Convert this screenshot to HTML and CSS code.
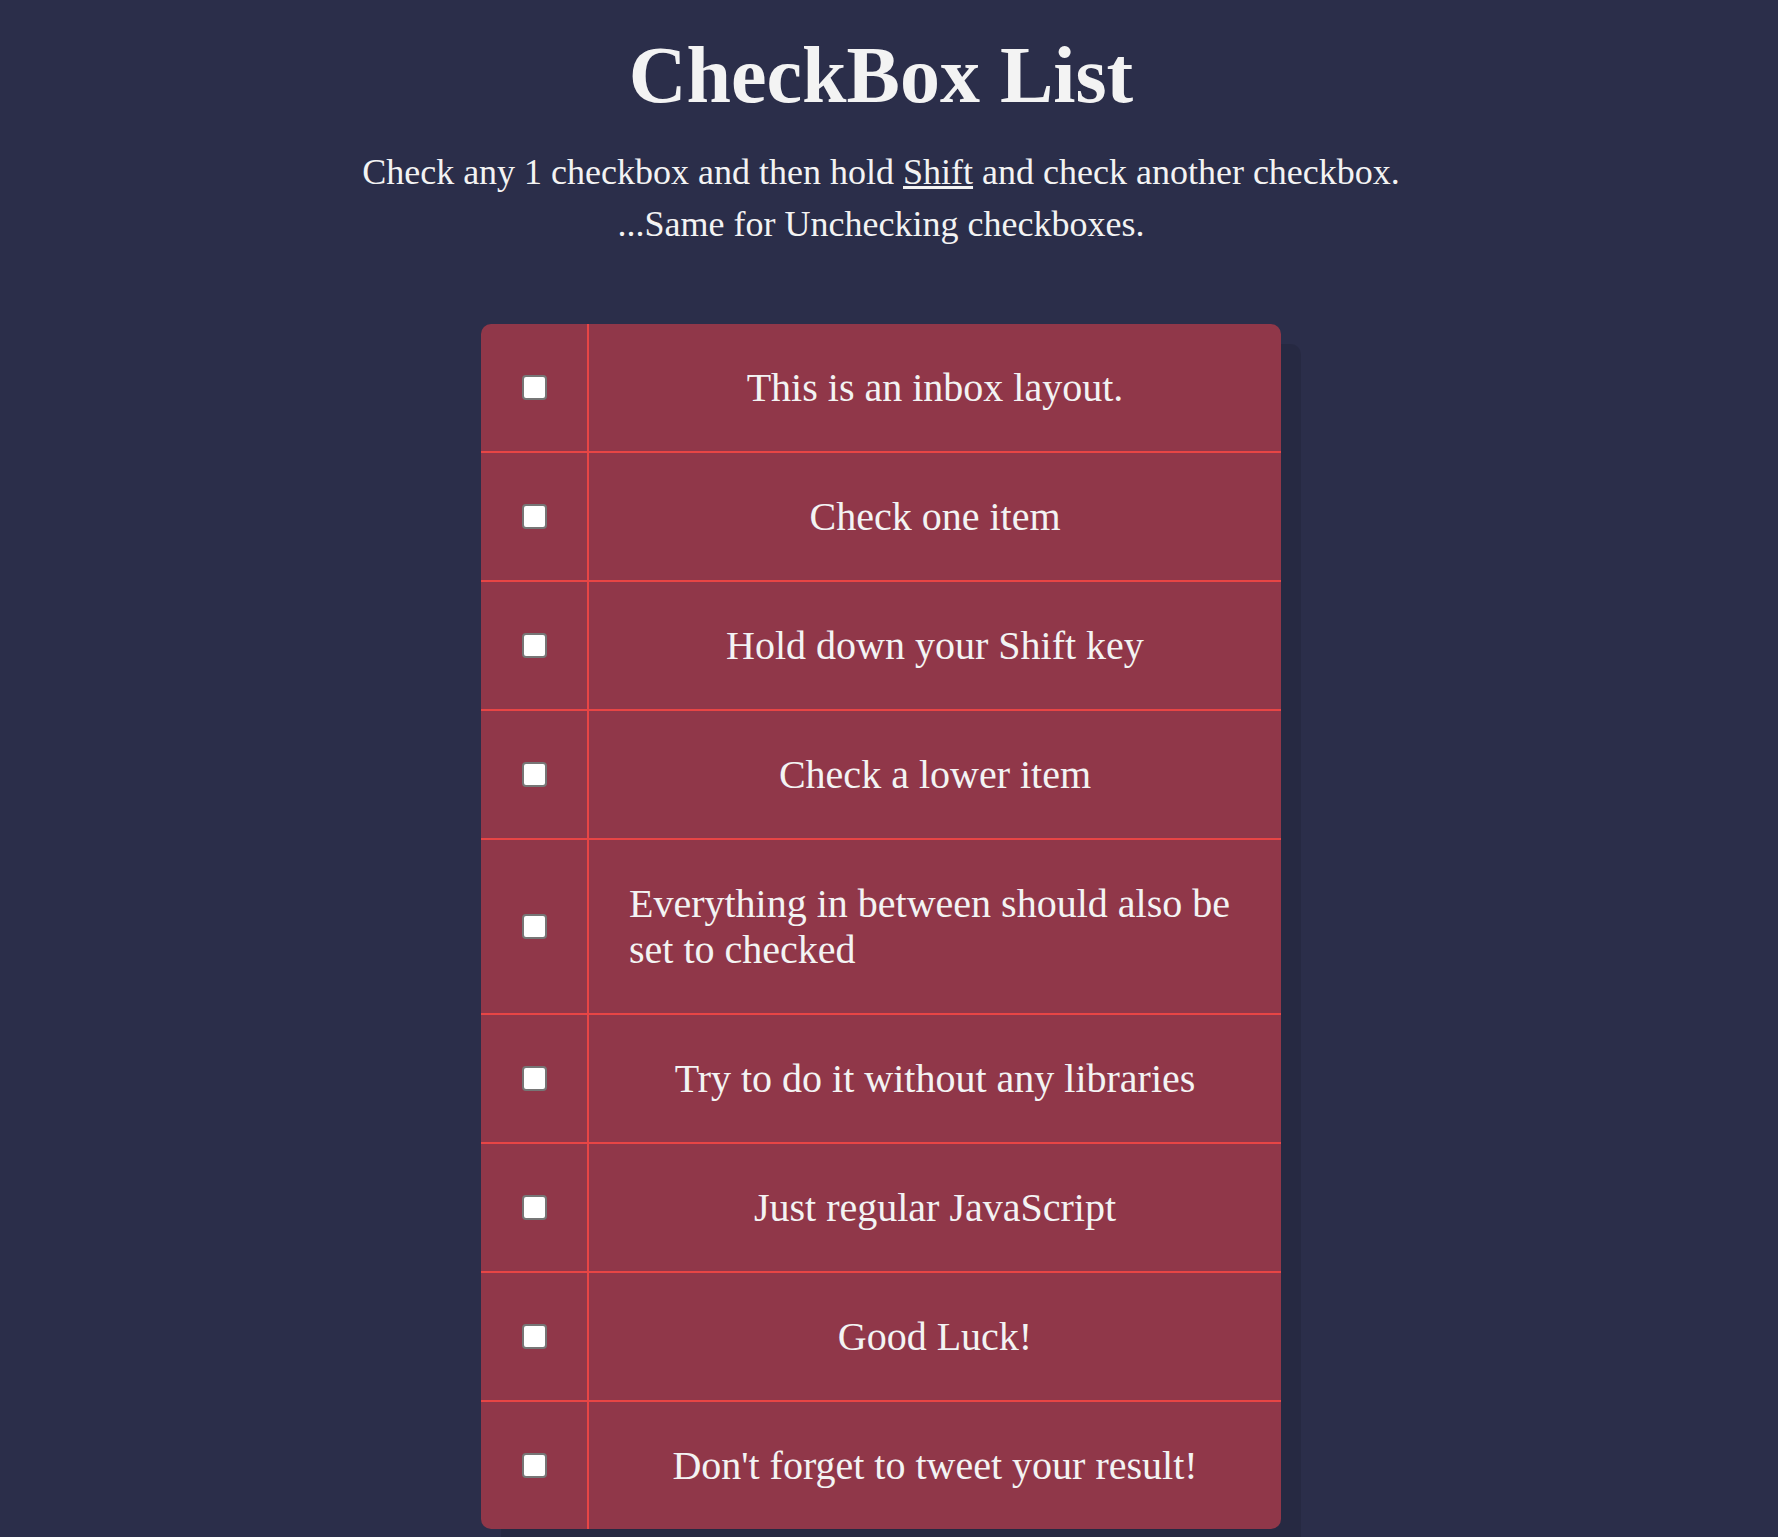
FILE: index.html
```html
<!DOCTYPE html>
<html lang="en">
<head>
<meta charset="utf-8">
<title>CheckBox List</title>
<link rel="stylesheet" href="styles.css">
</head>
<body>
<header class="header">
  <h1 class="title">CheckBox List</h1>
  <p class="intro">Check any 1 checkbox and then hold <u>Shift</u> and check another checkbox.<br>...Same for Unchecking checkboxes.</p>
</header>
<main class="inbox">
  <label class="item"><span class="check-cell"><input type="checkbox" class="box"></span><span class="label-cell"><span class="label-text">This is an inbox layout.</span></span></label>
  <label class="item"><span class="check-cell"><input type="checkbox" class="box"></span><span class="label-cell"><span class="label-text">Check one item</span></span></label>
  <label class="item"><span class="check-cell"><input type="checkbox" class="box"></span><span class="label-cell"><span class="label-text">Hold down your Shift key</span></span></label>
  <label class="item"><span class="check-cell"><input type="checkbox" class="box"></span><span class="label-cell"><span class="label-text">Check a lower item</span></span></label>
  <label class="item"><span class="check-cell"><input type="checkbox" class="box"></span><span class="label-cell"><span class="label-text">Everything in between should also be set to checked</span></span></label>
  <label class="item"><span class="check-cell"><input type="checkbox" class="box"></span><span class="label-cell"><span class="label-text">Try to do it without any libraries</span></span></label>
  <label class="item"><span class="check-cell"><input type="checkbox" class="box"></span><span class="label-cell"><span class="label-text">Just regular JavaScript</span></span></label>
  <label class="item"><span class="check-cell"><input type="checkbox" class="box"></span><span class="label-cell"><span class="label-text">Good Luck!</span></span></label>
  <label class="item"><span class="check-cell"><input type="checkbox" class="box"></span><span class="label-cell"><span class="label-text">Don't forget to tweet your result!</span></span></label>
</main>
</body>
</html>
```
FILE: styles.css
```css
html, body {
  margin: 0;
  padding: 0;
}
body {
  background: #2b2e4a;
  color: #f3f3f3;
  font-family: "Liberation Serif", "Times New Roman", serif;
  padding-right: 16px;
  padding-bottom: 40px;
}
.header {
  text-align: center;
  padding-top: 35px;
}
.title {
  margin: 0;
  font-size: 80px;
  line-height: 80px;
  font-weight: bold;
}
.intro {
  margin: 31px 0 0;
  font-size: 36px;
  line-height: 52px;
}
.inbox {
  width: 800px;
  margin: 74px auto 0;
  background: #903749;
  border-radius: 10px;
  box-shadow: 20px 20px 0 rgba(0, 0, 0, 0.1);
  display: flex;
  flex-direction: column;
}
.item {
  display: flex;
  border-bottom: 2px solid #e84545;
}
.item:last-child {
  border-bottom: none;
}
.check-cell {
  width: 106px;
  flex: none;
  border-right: 2px solid #e84545;
  display: flex;
  align-items: center;
  justify-content: center;
}
.box {
  appearance: none;
  -webkit-appearance: none;
  box-sizing: border-box;
  width: 25px;
  height: 25px;
  margin: 0;
  background: #ffffff;
  border: 2px solid #767676;
  border-radius: 4px;
}
.label-cell {
  flex: 1;
  display: flex;
  justify-content: center;
  align-items: center;
  padding: 40.5px 40px;
  font-size: 40px;
  line-height: 46px;
}
.label-text {
  text-align: left;
}
```
